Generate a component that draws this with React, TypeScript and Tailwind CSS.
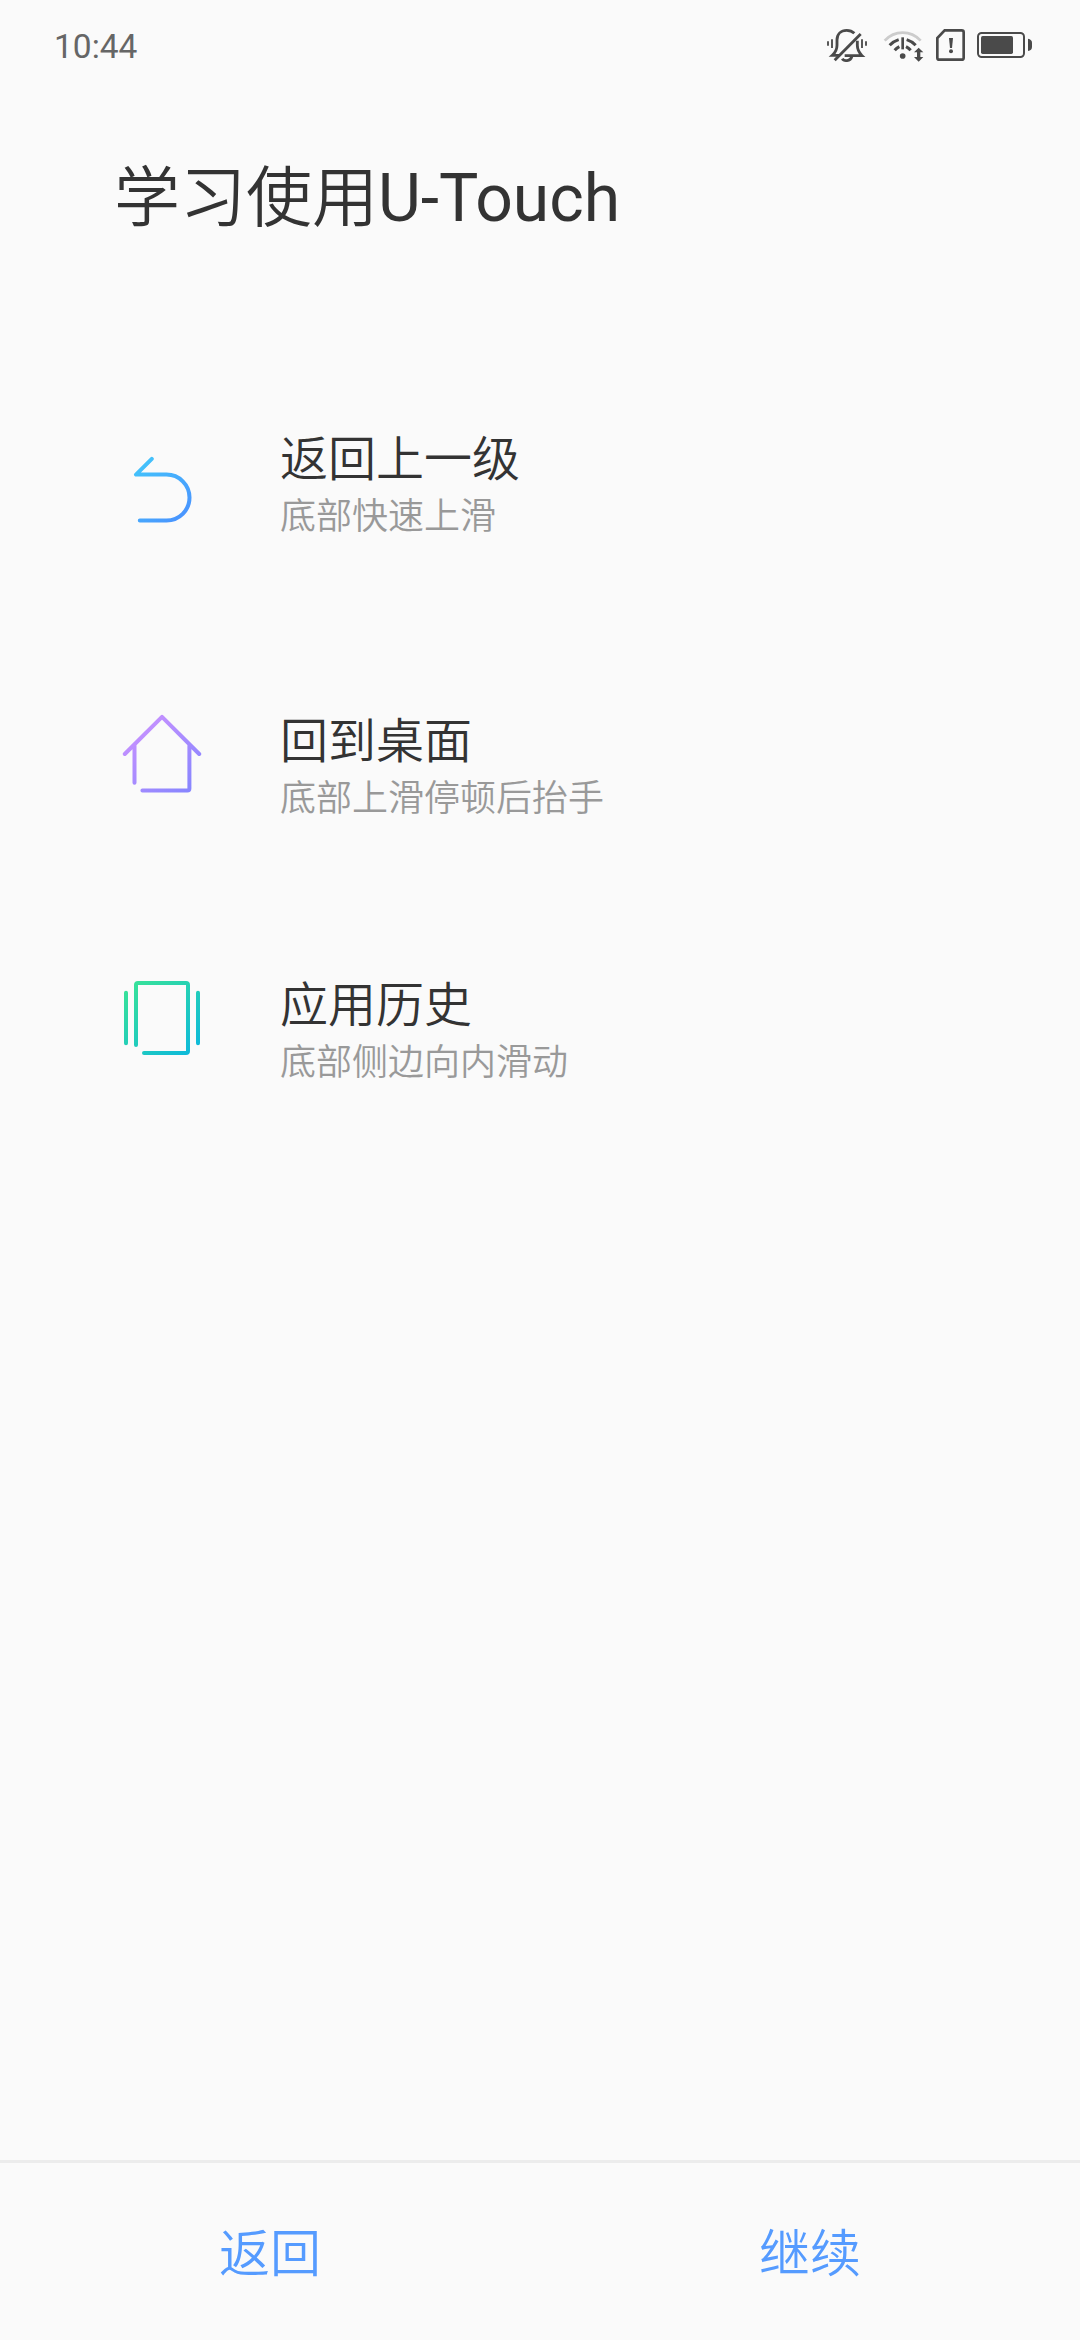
import type { ReactNode } from "react";

function Gradient({ id, from, to }: { id: string; from: string; to: string }) {
  return (
    <defs>
      <linearGradient id={id} gradientUnits="userSpaceOnUse" x1="25" y1="20" x2="85" y2="90">
        <stop offset="0" stopColor={from} />
        <stop offset="1" stopColor={to} />
      </linearGradient>
    </defs>
  );
}

function BackIcon() {
  return (
    <svg viewBox="0 0 110 110" className="size-[110px]" fill="none" stroke="url(#back)" strokeWidth="4" strokeLinecap="round" strokeLinejoin="round">
      <Gradient id="back" from="#42ccfa" to="#4a8eff" />
      <path d="M41.8 28.8 26 44.6H56.5a23 23 0 0 1 0 46H29.8" />
    </svg>
  );
}

function HomeIcon() {
  return (
    <svg viewBox="0 0 110 110" className="size-[110px]" fill="none" stroke="url(#home)" strokeWidth="4" strokeLinecap="round" strokeLinejoin="round">
      <Gradient id="home" from="#cb92ff" to="#8585ff" />
      <path d="M14.8 54 52 16.8 89.2 54M24.5 45V82.7M79.4 45V88.5a2 2 0 0 1-2 2H32.4" />
    </svg>
  );
}

function RecentsIcon() {
  return (
    <svg viewBox="0 0 110 110" className="size-[110px]" fill="none" stroke="url(#recents)" strokeWidth="4" strokeLinecap="round" strokeLinejoin="round">
      <Gradient id="recents" from="#36e09b" to="#0cb8dd" />
      <path d="M16 27.8V78.2M88 27.8V78.2M26 80V20a2 2 0 0 1 2-2H76a2 2 0 0 1 2 2V86a2 2 0 0 1-2 2H34" />
    </svg>
  );
}

function StatusIcons() {
  return (
    <svg viewBox="0 0 720 210" className="h-[70px] w-[240px]" fill="none" stroke="#4a4a4a">
      {/* muted bell */}
      <g strokeWidth="8.5">
        <path d="M87 136H67C77 127 81 118 81 106V90C81 72 93 61 110 61C119 61 127 64 133 70" />
        <path d="M142 92V106C142 118 147 128 156 137H104" />
        <path d="M97 146C101 154 121 156 126 138" />
        <path d="M74 151 152 72" />
      </g>
      <path d="M54 94V107M66 88V114M156 88V114M168 94V107" strokeWidth="5.5" />
      {/* wifi with data arrows */}
      <path d="M224 92C254 60 302 60 332 92" stroke="#cccccc" strokeWidth="8" />
      <path d="M239 106Q250 94 266 89M290 89Q306 94 317 106M254 121Q260 114 268 110M288 110Q296 114 302 121" strokeWidth="9" />
      <path d="M278 82V118" strokeWidth="8" />
      <circle cx="278" cy="138" r="8.5" fill="#4a4a4a" stroke="none" />
      <path d="m326 113 14 14H331V141H340L326 155 312 141H321V127H312Z" fill="#4a4a4a" stroke="none" />
      {/* sim alert */}
      <path d="M404 61H455a6 6 0 0 1 6 6V143a6 6 0 0 1-6 6H388a6 6 0 0 1-6-6V84Z" strokeWidth="8" />
      <path d="M417 84H429L426 114H420Z" fill="#4a4a4a" stroke="none" />
      <circle cx="423" cy="124" r="6" fill="#4a4a4a" stroke="none" />
      {/* battery */}
      <rect x="504" y="69" width="138" height="72" rx="11" strokeWidth="6" />
      <rect x="513" y="78" width="96" height="54" rx="5" fill="#4a4a4a" stroke="none" />
      <path d="M654 86C662 87 666 92 666 98V111C666 118 662 122 654 123Z" fill="#4a4a4a" stroke="none" />
    </svg>
  );
}

type GestureProps = { icon: ReactNode; title: string; hint: string; className?: string; textClassName?: string };

function Gesture({ icon, title, hint, className = "", textClassName = "" }: GestureProps) {
  return (
    <li className={"flex h-[110px] gap-[60px] " + className}>
      {icon}
      <div className={textClassName}>
        <h2 className="text-[48px] leading-[60px] text-[#333333]">{title}</h2>
        <p className="text-[36px] leading-[54px] text-[#999999]">{hint}</p>
      </div>
    </li>
  );
}

export default function App() {
  return (
    <div className="flex h-[2340px] w-[1080px] flex-col bg-[#fafafa] font-[Roboto,'Noto_Sans_CJK_SC',sans-serif] font-[350]">
      <header className="flex h-[90px] justify-between pr-[30px] pl-[54px]">
        <span className="pt-[27px] text-[33.5px] leading-[40px] font-normal text-[#666666]">10:44</span>
        <div className="pt-[10px]">
          <StatusIcons />
        </div>
      </header>
      <h1 className="mt-[59px] ml-[114px] text-[66px] leading-[100px] text-[#333333]">
        学习使用<span className="font-normal">U-Touch</span>
      </h1>
      <ul className="mt-[181px] flex flex-1 flex-col pl-[110px]">
        <Gesture icon={<BackIcon />} title="返回上一级" hint="底部快速上滑" />
        <Gesture className="mt-[160px]" textClassName="pt-[12px]" icon={<HomeIcon />} title="回到桌面" hint="底部上滑停顿后抬手" />
        <Gesture className="mt-[155px]" textClassName="pt-[11px]" icon={<RecentsIcon />} title="应用历史" hint="底部侧边向内滑动" />
      </ul>
      <footer className="flex h-[180px] border-t-[3px] border-[#ececec] pt-[8px] text-[51px] text-[#559bff]">
        <button className="flex-1">返回</button>
        <button className="flex-1">继续</button>
      </footer>
    </div>
  );
}
